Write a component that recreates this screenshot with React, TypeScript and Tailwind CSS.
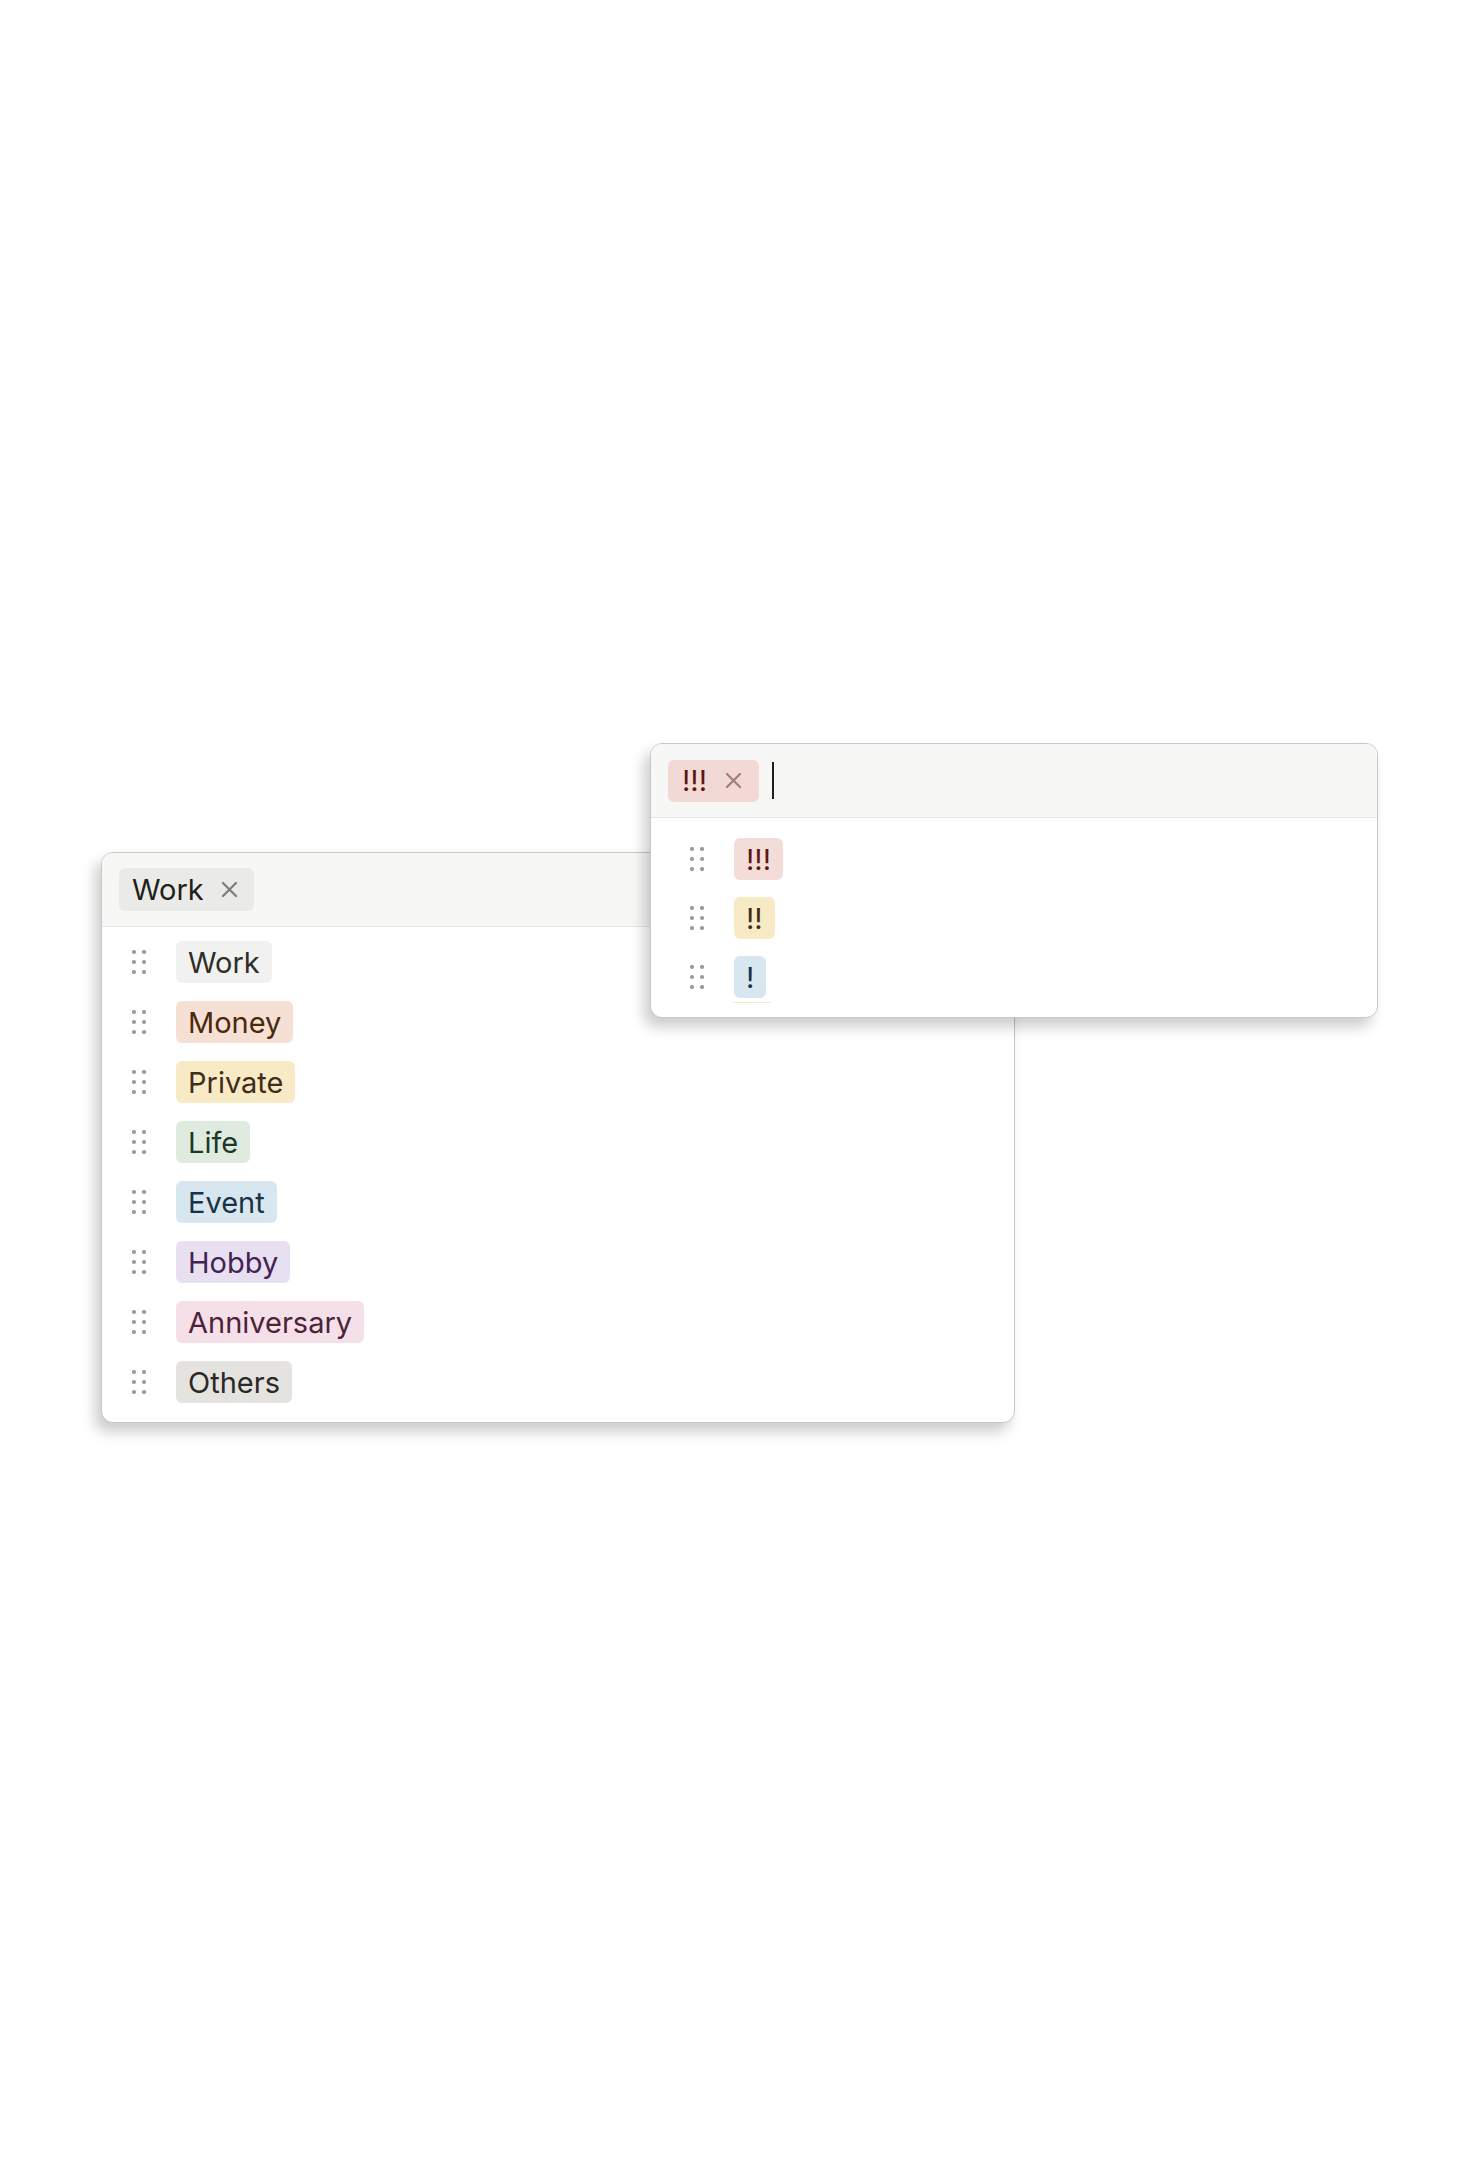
type Tag = { label: string; bg: string; fg: string };

const tags: Tag[] = [
  { label: 'Work', bg: 'bg-[#f1f1ef]', fg: 'text-[#2f2d28]' },
  { label: 'Money', bg: 'bg-[#f5e0d3]', fg: 'text-[#49290e]' },
  { label: 'Private', bg: 'bg-[#f7eac5]', fg: 'text-[#402c1b]' },
  { label: 'Life', bg: 'bg-[#dfebdf]', fg: 'text-[#1c3829]' },
  { label: 'Event', bg: 'bg-[#d8e6f0]', fg: 'text-[#183347]' },
  { label: 'Hobby', bg: 'bg-[#e8dff0]', fg: 'text-[#412454]' },
  { label: 'Anniversary', bg: 'bg-[#f5e0ea]', fg: 'text-[#4c2337]' },
  { label: 'Others', bg: 'bg-[#e4e3e0]', fg: 'text-[#2a2925]' },
];

const priorities: Tag[] = [
  { label: '!!!', bg: 'bg-[#f4dcd8]', fg: 'text-[#5d1715]' },
  { label: '!!', bg: 'bg-[#f7eac5]', fg: 'text-[#402c1b]' },
  { label: '!', bg: 'bg-[#d8e6f0]', fg: 'text-[#183347]' },
];

function Handle() {
  return (
    <svg width="14" height="24" viewBox="0 0 14 24" className="shrink-0 text-[#9d9c99]">
      {[2, 12, 22].map((y) => (
        <g key={y} fill="currentColor">
          <circle cx="2" cy={y} r="2.1" />
          <circle cx="12" cy={y} r="2.1" />
        </g>
      ))}
    </svg>
  );
}

function Cross({ className }: { className: string }) {
  return (
    <svg width="17" height="17" viewBox="0 0 17 17" className={className}>
      <path d="M2 2 L15 15 M15 2 L2 15" stroke="currentColor" strokeWidth="2.3" strokeLinecap="round" />
    </svg>
  );
}

function Chip({ tag }: { tag: Tag }) {
  return (
    <span
      className={`${tag.bg} ${tag.fg} h-[42px] px-3 rounded-md flex items-center text-[29px] leading-none whitespace-nowrap`}
    >
      {tag.label}
    </span>
  );
}

function Row({ tag }: { tag: Tag }) {
  return (
    <div className="flex items-center gap-[30px]">
      <Handle />
      <Chip tag={tag} />
    </div>
  );
}

export default function App() {
  return (
    <div className="w-[1478px] h-[2165px] bg-white pt-[743px] font-['Inter','Liberation_Sans',sans-serif]">
      {/* priority picker, sits on top */}
      <div className="relative z-10 ml-[650px] w-[728px] h-[275px] rounded-[12px] border border-[#c8c8c6] bg-white overflow-hidden shadow-[-6px_9px_14px_rgba(0,0,0,0.2)]">
        <div className="h-[74px] bg-[#f7f7f5] border-b border-[#e6e6e4] pl-[17px] flex items-center gap-[13px]">
          <span className="h-[42px] pl-[14px] pr-[17px] rounded-md bg-[#f2d9d5] flex items-center gap-[18px] text-[29px] leading-none text-[#5d1715]">
            !!!
            <Cross className="text-[#a47f7a]" />
          </span>
          <span className="w-[2px] h-[37px] bg-[#1f1f1f]" />
        </div>
        <div className="pl-[39px] pt-[20px] flex flex-col gap-[17px]">
          {priorities.map((p) => (
            <Row key={p.label} tag={p} />
          ))}
          <div className="-mt-[13px] ml-[43px] w-[38px] h-px bg-[#f6ebc9]" />
        </div>
      </div>

      {/* tag picker */}
      <div className="relative ml-[101px] mt-[-166px] w-[914px] h-[571px] rounded-[12px] border border-[#c8c8c6] bg-white overflow-hidden shadow-[-6px_9px_14px_rgba(0,0,0,0.2)]">
        <div className="h-[74px] bg-[#f7f7f5] border-b border-[#e6e6e4] pl-[17px] flex items-center">
          <span className="h-[43px] pl-[13px] pr-[16px] rounded-md bg-[#eaeae8] flex items-center gap-[17px] text-[29px] leading-none text-[#1f1e1b]">
            Work
            <Cross className="text-[#7f7e7a]" />
          </span>
        </div>
        <div className="pl-[30px] pt-[14px] flex flex-col gap-[18px]">
          {tags.map((t) => (
            <Row key={t.label} tag={t} />
          ))}
        </div>
      </div>
    </div>
  );
}
